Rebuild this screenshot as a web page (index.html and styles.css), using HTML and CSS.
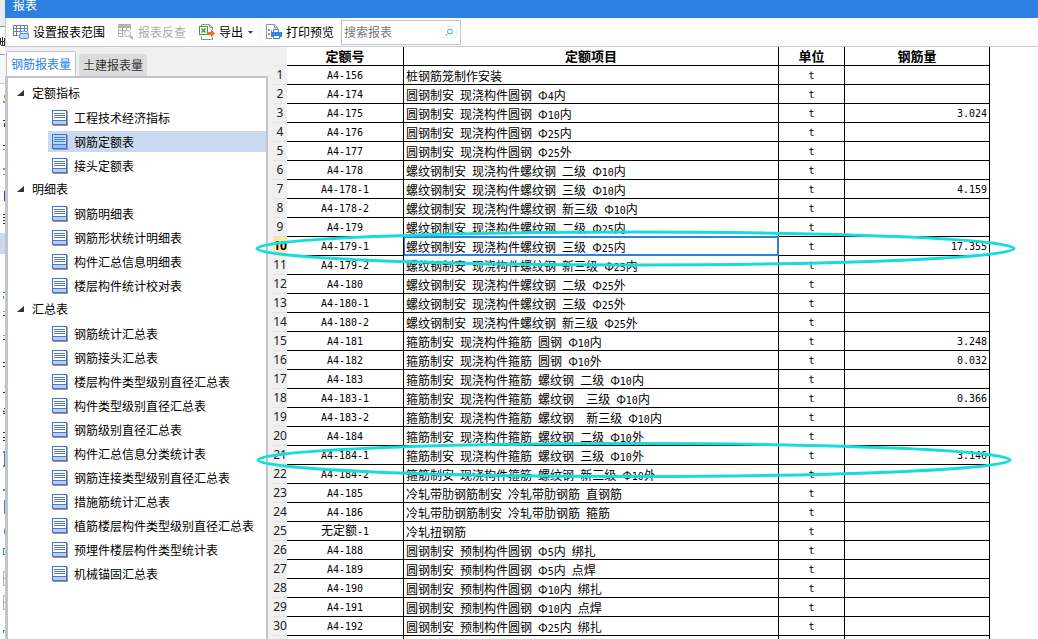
FILE: index.html
```
<!DOCTYPE html>
<html lang="zh-CN">
<head>
<meta charset="utf-8">
<title>报表</title>
<link rel="stylesheet" href="styles.css">
</head>
<body>
<svg class="defs" aria-hidden="true">
  <symbol id="doc" viewBox="0 0 16 16">
    <path class="doc-shade" d="M1 15h14V1h1v15H1z"/>
    <rect class="doc-page" x="0.5" y="0.5" width="14" height="14"/>
    <path class="doc-foot" d="M1 11h13v3H1z"/>
    <path class="doc-line" d="M2 3.5h11M2 5.5h11M2 7.500h11M1 10.500h13"/>
  </symbol>
</svg>
<div class="app">
  <div class="behind" aria-hidden="true">
    <svg width="5" height="639" viewBox="0 0 5 639">
      <path fill="#e9edf0" d="M0 0h5v26H0z"/>
      <path fill="#9a9a9a" d="M0 26h5v1H0zM0 54h5v1H0z"/>
      <path fill="#f6f6f6" d="M0 55h5v28H0z"/>
      <path fill="#c8c8c8" d="M0 83h5v1H0z"/>
      <path fill="#333" d="M0 38h1v7H0zM0 41h5v1H0zM2 37h1v8H2zM1 45h4v1H1zM4 38h1v8H4zM3 120h2v1H3zM4 123h1v4H4zM3 145h2v1H3zM3 214h2v1H3zM3 217h2v1H3zM3 220h2v1H3zM3 223h2v1H3zM3 315h2v1H3zM3 339h2v1H3zM3 362h2v1H3zM3 366h2v1H3zM3 392h2v1H3zM4 408h1v1H4zM3 411h2v1H3zM3 413h2v1H3zM3 432h2v1H3zM3 437h2v1H3zM3 440h2v1H3z"/>
      <path fill="#d98a2b" d="M4 95h1v3H4zM3 101h2v2H3zM3 149h2v1H3zM3 168h2v2H3zM3 174h2v1H3zM3 311h2v1H3zM3 335h2v1H3zM4 386h1v1H4z"/>
      <path fill="#8a1f8a" d="M4 191h1v10H4z"/>
      <path fill="#c9daf0" d="M0 233h5v21H0z"/>
      <path fill="#4a86cf" d="M3 292h2v1H3zM3 296h1v3H3zM3 451h2v2H3zM4 453h1v12H4zM3 465h2v2H3zM3 489h2v2H3zM4 500h1v14H4zM4 529h1v5H4zM3 548h2v1H3zM3 549h1v5H3zM3 554h2v1H3zM3 630h2v1H3zM3 631h1v2H3z"/>
      <path fill="none" stroke="#aaa" d="M5 571.500H3.500v14H5M5 578.500H3.500M5 595.500H3.500v14H5M5 602.500H3.500"/>
    </svg>
  </div>
  <div class="window">
    <header class="title">报表</header>
    <div class="toolbar">
      <button type="button" class="tool">
        <svg width="16" height="16" viewBox="0 0 16 16" fill="none"><path stroke="#6f7f92" d="M.5 11.500V1.500h14v6M0 4.500h15M0 7.500h14M0 11.500h5M3.500 1v11M7.500 1v6M11.500 1v6"/><ellipse cx="11" cy="9" rx="4" ry="2" fill="#fff" stroke="#4e8fdd"/><rect x="6.500" y="9.500" width="9" height="5" rx="1.500" fill="#c4dcfa" stroke="#4e8fdd"/></svg>
        <span>设置报表范围</span>
      </button>
      <button type="button" class="tool" disabled>
        <svg width="16" height="16" viewBox="0 0 16 16" fill="none" stroke="#b0b0b0"><path fill="#b8b8b8" d="M.5.5h12v3H.5z"/><path d="M.5 3v9.500H6M12.500 3v3M0 6.500h8M0 9.500h5M4.500 3v9M8.500 3v3"/><circle cx="9.500" cy="9.500" r="3" fill="#fff"/><path stroke-width="2" d="m12 12 3 3"/></svg>
        <span>报表反查</span>
      </button>
      <button type="button" class="tool">
        <svg width="16" height="16" viewBox="0 0 16 16" fill="none"><path stroke="#8796a5" d="M2.500 2V.5h8l3 3V6M2.500 12v3.500h11V13M10.500.5v3h3"/><rect x=".5" y="2.500" width="8" height="8" fill="#fff" stroke="#4c9a2a"/><path stroke="#4c9a2a" stroke-width="1.500" d="m2.500 4.500 4 4m0-4-4 4"/><path fill="#f07020" d="M9 8h3V5.500L16 9.500 12 13.500V11H9z"/></svg>
        <span>导出</span>
        <svg class="caret" width="5" height="3" viewBox="0 0 5 3"><path fill="#444" d="M0 0h5L2.500 3z"/></svg>
      </button>
      <button type="button" class="tool">
        <svg width="16" height="16" viewBox="0 0 16 16" fill="none"><path stroke="#8796a5" d="M11.500 6V3.500l-3-3h-8v14H6M8.500.5v3h3"/><path fill="#8796a5" d="M2 5h2v2H2zM2 9h2v2H2zM5 6h1v2H5z"/><path stroke="#3b82d8" fill="#fff" d="M7.500 8.500v-3h5v3"/><path fill="#3b82d8" d="M5 8h11v5H5z"/><path fill="#fff" stroke="#3b82d8" d="M7.500 11.500h6v3h-6z"/></svg>
        <span>打印预览</span>
      </button>
      <form class="search">
        <input type="text" aria-label="搜索报表" placeholder="搜索报表">
        <button type="button" aria-label="搜索"><svg width="9" height="9" viewBox="0 0 9 9" fill="none" stroke="#4a98e0"><circle cx="5" cy="3.500" r="2.500"/><path d="M3 5.500.5 8"/></svg></button>
      </form>
    </div>
    <div class="body">
      <aside class="side">
        <div class="tabs" role="tablist">
          <button type="button" role="tab" aria-selected="true" class="tab active">钢筋报表量</button>
          <button type="button" role="tab" aria-selected="false" class="tab">土建报表量</button>
        </div>
        <nav class="tree">
          <h2><svg width="7" height="7"><path d="M7 0v6H0z"/></svg>定额指标</h2>
          <ul>
            <li><a href="#"><svg><use href="#doc"/></svg>工程技术经济指标</a></li>
            <li><a href="#" class="current" aria-current="page"><svg><use href="#doc"/></svg>钢筋定额表</a></li>
            <li><a href="#"><svg><use href="#doc"/></svg>接头定额表</a></li>
          </ul>
          <h2><svg width="7" height="7"><path d="M7 0v6H0z"/></svg>明细表</h2>
          <ul>
            <li><a href="#"><svg><use href="#doc"/></svg>钢筋明细表</a></li>
            <li><a href="#"><svg><use href="#doc"/></svg>钢筋形状统计明细表</a></li>
            <li><a href="#"><svg><use href="#doc"/></svg>构件汇总信息明细表</a></li>
            <li><a href="#"><svg><use href="#doc"/></svg>楼层构件统计校对表</a></li>
          </ul>
          <h2><svg width="7" height="7"><path d="M7 0v6H0z"/></svg>汇总表</h2>
          <ul>
            <li><a href="#"><svg><use href="#doc"/></svg>钢筋统计汇总表</a></li>
            <li><a href="#"><svg><use href="#doc"/></svg>钢筋接头汇总表</a></li>
            <li><a href="#"><svg><use href="#doc"/></svg>楼层构件类型级别直径汇总表</a></li>
            <li><a href="#"><svg><use href="#doc"/></svg>构件类型级别直径汇总表</a></li>
            <li><a href="#"><svg><use href="#doc"/></svg>钢筋级别直径汇总表</a></li>
            <li><a href="#"><svg><use href="#doc"/></svg>构件汇总信息分类统计表</a></li>
            <li><a href="#"><svg><use href="#doc"/></svg>钢筋连接类型级别直径汇总表</a></li>
            <li><a href="#"><svg><use href="#doc"/></svg>措施筋统计汇总表</a></li>
            <li><a href="#"><svg><use href="#doc"/></svg>植筋楼层构件类型级别直径汇总表</a></li>
            <li><a href="#"><svg><use href="#doc"/></svg>预埋件楼层构件类型统计表</a></li>
            <li><a href="#"><svg><use href="#doc"/></svg>机械锚固汇总表</a></li>
          </ul>
        </nav>
      </aside>
      <main class="sheet">
        <table>
          <colgroup><col class="c-row"><col class="c-code"><col class="c-item"><col class="c-unit"><col class="c-qty"></colgroup>
          <thead><tr><td class="corner"></td><th scope="col">定额号</th><th scope="col">定额项目</th><th scope="col">单位</th><th scope="col">钢筋量</th></tr></thead>
          <tbody>
            <tr><th scope="row">1</th><td>A4-156</td><td>桩钢筋笼制作安装</td><td>t</td><td></td></tr>
            <tr><th scope="row">2</th><td>A4-174</td><td>圆钢制安<i> </i>现浇构件圆钢<i> </i>Φ<i>4</i>内</td><td>t</td><td></td></tr>
            <tr><th scope="row">3</th><td>A4-175</td><td>圆钢制安<i> </i>现浇构件圆钢<i> </i>Φ<i>10</i>内</td><td>t</td><td>3.024</td></tr>
            <tr><th scope="row">4</th><td>A4-176</td><td>圆钢制安<i> </i>现浇构件圆钢<i> </i>Φ<i>25</i>内</td><td>t</td><td></td></tr>
            <tr><th scope="row">5</th><td>A4-177</td><td>圆钢制安<i> </i>现浇构件圆钢<i> </i>Φ<i>25</i>外</td><td>t</td><td></td></tr>
            <tr><th scope="row">6</th><td>A4-178</td><td>螺纹钢制安<i> </i>现浇构件螺纹钢<i> </i>二级<i> </i>Φ<i>10</i>内</td><td>t</td><td></td></tr>
            <tr><th scope="row">7</th><td>A4-178-1</td><td>螺纹钢制安<i> </i>现浇构件螺纹钢<i> </i>三级<i> </i>Φ<i>10</i>内</td><td>t</td><td>4.159</td></tr>
            <tr><th scope="row">8</th><td>A4-178-2</td><td>螺纹钢制安<i> </i>现浇构件螺纹钢<i> </i>新三级<i> </i>Φ<i>10</i>内</td><td>t</td><td></td></tr>
            <tr><th scope="row">9</th><td>A4-179</td><td>螺纹钢制安<i> </i>现浇构件螺纹钢<i> </i>二级<i> </i>Φ<i>25</i>内</td><td>t</td><td></td></tr>
            <tr class="picked"><th scope="row">10</th><td>A4-179-1</td><td class="cursor">螺纹钢制安<i> </i>现浇构件螺纹钢<i> </i>三级<i> </i>Φ<i>25</i>内</td><td>t</td><td>17.355</td></tr>
            <tr><th scope="row">11</th><td>A4-179-2</td><td>螺纹钢制安<i> </i>现浇构件螺纹钢<i> </i>新三级<i> </i>Φ<i>25</i>内</td><td>t</td><td></td></tr>
            <tr><th scope="row">12</th><td>A4-180</td><td>螺纹钢制安<i> </i>现浇构件螺纹钢<i> </i>二级<i> </i>Φ<i>25</i>外</td><td>t</td><td></td></tr>
            <tr><th scope="row">13</th><td>A4-180-1</td><td>螺纹钢制安<i> </i>现浇构件螺纹钢<i> </i>三级<i> </i>Φ<i>25</i>外</td><td>t</td><td></td></tr>
            <tr><th scope="row">14</th><td>A4-180-2</td><td>螺纹钢制安<i> </i>现浇构件螺纹钢<i> </i>新三级<i> </i>Φ<i>25</i>外</td><td>t</td><td></td></tr>
            <tr><th scope="row">15</th><td>A4-181</td><td>箍筋制安<i> </i>现浇构件箍筋<i> </i>圆钢<i> </i>Φ<i>10</i>内</td><td>t</td><td>3.248</td></tr>
            <tr><th scope="row">16</th><td>A4-182</td><td>箍筋制安<i> </i>现浇构件箍筋<i> </i>圆钢<i> </i>Φ<i>10</i>外</td><td>t</td><td>0.032</td></tr>
            <tr><th scope="row">17</th><td>A4-183</td><td>箍筋制安<i> </i>现浇构件箍筋<i> </i>螺纹钢<i> </i>二级<i> </i>Φ<i>10</i>内</td><td>t</td><td></td></tr>
            <tr><th scope="row">18</th><td>A4-183-1</td><td>箍筋制安<i> </i>现浇构件箍筋<i> </i>螺纹钢<i>  </i>三级<i> </i>Φ<i>10</i>内</td><td>t</td><td>0.366</td></tr>
            <tr><th scope="row">19</th><td>A4-183-2</td><td>箍筋制安<i> </i>现浇构件箍筋<i> </i>螺纹钢<i>  </i>新三级<i> </i>Φ<i>10</i>内</td><td>t</td><td></td></tr>
            <tr><th scope="row">20</th><td>A4-184</td><td>箍筋制安<i> </i>现浇构件箍筋<i> </i>螺纹钢<i> </i>二级<i> </i>Φ<i>10</i>外</td><td>t</td><td></td></tr>
            <tr><th scope="row">21</th><td>A4-184-1</td><td>箍筋制安<i> </i>现浇构件箍筋<i> </i>螺纹钢<i> </i>三级<i> </i>Φ<i>10</i>外</td><td>t</td><td>3.146</td></tr>
            <tr><th scope="row">22</th><td>A4-184-2</td><td>箍筋制安<i> </i>现浇构件箍筋<i> </i>螺纹钢<i> </i>新三级<i> </i>Φ<i>10</i>外</td><td>t</td><td></td></tr>
            <tr><th scope="row">23</th><td>A4-185</td><td>冷轧带肋钢筋制安<i> </i>冷轧带肋钢筋<i> </i>直钢筋</td><td>t</td><td></td></tr>
            <tr><th scope="row">24</th><td>A4-186</td><td>冷轧带肋钢筋制安<i> </i>冷轧带肋钢筋<i> </i>箍筋</td><td>t</td><td></td></tr>
            <tr><th scope="row">25</th><td><span class="cjk">无定额</span>-1</td><td>冷轧扭钢筋</td><td>t</td><td></td></tr>
            <tr><th scope="row">26</th><td>A4-188</td><td>圆钢制安<i> </i>预制构件圆钢<i> </i>Φ<i>5</i>内<i> </i>绑扎</td><td>t</td><td></td></tr>
            <tr><th scope="row">27</th><td>A4-189</td><td>圆钢制安<i> </i>预制构件圆钢<i> </i>Φ<i>5</i>内<i> </i>点焊</td><td>t</td><td></td></tr>
            <tr><th scope="row">28</th><td>A4-190</td><td>圆钢制安<i> </i>预制构件圆钢<i> </i>Φ<i>10</i>内<i> </i>绑扎</td><td>t</td><td></td></tr>
            <tr><th scope="row">29</th><td>A4-191</td><td>圆钢制安<i> </i>预制构件圆钢<i> </i>Φ<i>10</i>内<i> </i>点焊</td><td>t</td><td></td></tr>
            <tr><th scope="row">30</th><td>A4-192</td><td>圆钢制安<i> </i>预制构件圆钢<i> </i>Φ<i>25</i>内<i> </i>绑扎</td><td>t</td><td></td></tr>
            <tr><th scope="row"></th><td></td><td></td><td></td><td></td></tr>
          </tbody>
        </table>
      </main>
    </div>
  </div>
  <svg class="marks" width="1038" height="639" viewBox="0 0 1038 639" aria-hidden="true">
    <ellipse cx="635.5" cy="248.5" rx="378.5" ry="16.500"/>
    <ellipse cx="634" cy="460" rx="376" ry="16.500"/>
  </svg>
</div>
</body>
</html>
```
FILE: styles.css
```
* { box-sizing: border-box; }

body {
  margin: 0;
  font: 12px/16px "Noto Sans CJK SC", sans-serif;
  color: #000;
  background: #fff;
}

button, input { font: inherit; color: inherit; }

svg { flex: none; }

.defs { position: absolute; width: 0; height: 0; }

.app {
  position: relative;
  display: flex;
  height: 100vh;
  overflow: hidden;
}

.behind { width: 5px; flex: none; overflow: hidden; background: #fff; }
.behind svg { display: block; }

.window {
  flex: 1;
  min-width: 0;
  display: flex;
  flex-direction: column;
}

.title {
  height: 18px;
  flex: none;
  padding-left: 8px;
  line-height: 10px;
  color: #fff;
  background: #2d80e2;
}

.toolbar {
  height: 29px;
  flex: none;
  display: flex;
  align-items: center;
  padding-left: 3px;
  background: #fcfcfc;
  border-left: 1px solid #c4c8d0;
  border-bottom: 1px solid #c6c8d0;
}

.tool {
  display: flex;
  align-items: center;
  gap: 4px;
  height: 22px;
  margin-right: 5px;
  padding: 0 4px;
  border: 0;
  border-radius: 3px;
  background: #fff;
  white-space: nowrap;
}

.tool:disabled { color: #aaa; }
.tool:nth-last-child(2) { margin-right: 3px; }
.caret { margin-left: 1px; }

.search {
  display: flex;
  align-items: center;
  width: 120px;
  height: 25px;
  border: 1px solid #bfc4cb;
  background: #fff;
}

.search input {
  flex: 1;
  min-width: 0;
  padding: 0 0 0 2px;
  border: 0;
  outline: 0;
  background: none;
}

.search input::placeholder { color: #777; opacity: 1; }

.search button {
  display: flex;
  justify-content: center;
  align-items: center;
  width: 16px;
  height: 12px;
  margin-right: 3px;
  padding: 0;
  border: 1px solid #eee;
  background: #fff;
}

.body { flex: 1; min-height: 0; display: flex; }

.side {
  width: 268px;
  flex: none;
  display: flex;
  flex-direction: column;
  padding: 4px 5px 0 0;
  background: #f0f0f0;
}

.tabs { display: flex; align-items: flex-end; gap: 3px; padding-left: 1px; }

.tab {
  height: 22px;
  padding: 0 4px;
  border: 0;
  border-radius: 2px 2px 0 0;
  background: #dcdcdc;
  color: #333;
}

.tab.active {
  height: 25px;
  border: 1px solid #bfc4cb;
  border-bottom: 0;
  background: #fff;
  color: #2d80e2;
}

.tree {
  flex: 1;
  min-height: 0;
  overflow: hidden;
  padding-top: 3px;
  border: solid #c0c5cc;
  border-width: 2px 2px 0 3px;
  background: #fff;
}

.tree h2 {
  display: flex;
  align-items: center;
  gap: 8px;
  height: 24px;
  margin: 0;
  padding-left: 9px;
  font-size: 12px;
  font-weight: 400;
}

.tree h2 svg { fill: #333; }

.tree ul { margin: 0; padding: 0 0 0 40px; list-style: none; }
.tree li { height: 24px; padding: 2px 0 1px; }

.tree a {
  display: flex;
  align-items: center;
  gap: 6px;
  height: 21px;
  padding-left: 4px;
  color: inherit;
  text-decoration: none;
  white-space: nowrap;
}

.tree a svg { width: 16px; height: 16px; --page: #fff; --foot: #b9cdfb; }
.tree a.current { background: #c9daf0; }
.tree a.current svg { --page: #b4dcfa; --foot: #8cc0fa; }

.doc-shade { fill: #999; }
.doc-page { fill: var(--page); stroke: #4670c4; }
.doc-foot { fill: var(--foot); }
.doc-line { stroke: #4f78cc; fill: none; }

.sheet { flex: 1; min-width: 0; overflow: hidden; }

table { width: 717px; table-layout: fixed; border-spacing: 0; }

.c-row { width: 14px; }
.c-code { width: 117px; }
.c-item { width: 375px; }
.c-unit { width: 66px; }
.c-qty { width: 145px; }

td, th {
  height: 19px;
  padding: 0;
  border: solid #000;
  border-width: 0 1px 1px 0;
  line-height: 16px;
  white-space: pre;
  vertical-align: middle;
}

thead th { font-size: 13px; font-weight: 700; text-align: center; }

tbody th, .corner {
  border-width: 0 0 1px;
  border-color: #e2e2e2;
  background: #f0f0f0;
  color: #222;
  font: 400 12px/16px "Noto Sans", sans-serif;
}

td:nth-child(2), td:nth-child(4), td:nth-child(5), td i {
  font-family: "DejaVu Sans Mono", monospace;
  font-size: 10px;
  font-style: normal;
}

td i, .cjk { line-height: 1; }

tbody td:nth-child(n+2) { padding-top: 1px; }
td:nth-child(2), td:nth-child(4) { text-align: center; }
td:nth-child(3) { padding-left: 2px; }
td:nth-child(5) { padding-right: 2px; text-align: right; }

.cjk { font-family: "Noto Sans CJK SC", sans-serif; font-size: 12px; }

.picked th { background: #fde6a8; color: #000; font-weight: 700; }
.cursor { box-shadow: inset 0 0 0 1px #2d80e2, 0 -1px #2d80e2; border-color: #2d80e2; }

.marks {
  position: absolute;
  top: 0;
  left: 0;
  pointer-events: none;
  fill: none;
  stroke: #18dcdc;
  stroke-width: 3;
}
```
